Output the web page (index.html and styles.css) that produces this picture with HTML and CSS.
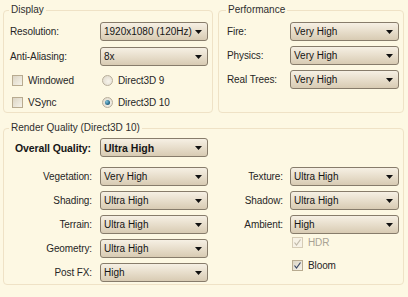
FILE: index.html
```html
<!DOCTYPE html>
<html>
<head>
<meta charset="utf-8">
<link rel="stylesheet" href="styles.css">
</head>
<body>
<div class="page">
  <div class="top">
    <fieldset class="group display">
      <legend>Display</legend>
      <div class="form">
        <span class="lbl">Resolution:</span>
        <div class="sel"><span>1920x1080 (120Hz)</span><svg class="arr" width="7" height="4" viewBox="0 0 7 4"><polygon points="0,0 7,0 3.5,4"/></svg></div>
        <span class="lbl">Anti-Aliasing:</span>
        <div class="sel"><span>8x</span><svg class="arr" width="7" height="4" viewBox="0 0 7 4"><polygon points="0,0 7,0 3.5,4"/></svg></div>
      </div>
      <div class="opts">
        <div class="opt"><span class="box"></span><span>Windowed</span></div>
        <div class="opt"><span class="radio"></span><span>Direct3D 9</span></div>
        <div class="opt"><span class="box"></span><span>VSync</span></div>
        <div class="opt"><span class="radio on"></span><span>Direct3D 10</span></div>
      </div>
    </fieldset>
    <fieldset class="group perf">
      <legend>Performance</legend>
      <div class="form form-perf">
        <span class="lbl">Fire:</span>
        <div class="sel"><span>Very High</span><svg class="arr" width="7" height="4" viewBox="0 0 7 4"><polygon points="0,0 7,0 3.5,4"/></svg></div>
        <span class="lbl">Physics:</span>
        <div class="sel"><span>Very High</span><svg class="arr" width="7" height="4" viewBox="0 0 7 4"><polygon points="0,0 7,0 3.5,4"/></svg></div>
        <span class="lbl">Real Trees:</span>
        <div class="sel"><span>Very High</span><svg class="arr" width="7" height="4" viewBox="0 0 7 4"><polygon points="0,0 7,0 3.5,4"/></svg></div>
      </div>
    </fieldset>
  </div>
  <fieldset class="group render">
    <legend>Render Quality (Direct3D 10)</legend>
    <div class="overall">
      <span class="lbl rl bold">Overall Quality:</span>
      <div class="sel bold"><span>Ultra High</span><svg class="arr" width="7" height="4" viewBox="0 0 7 4"><polygon points="0,0 7,0 3.5,4"/></svg></div>
    </div>
    <div class="cols">
      <div class="form form-left">
        <span class="lbl rl">Vegetation:</span>
        <div class="sel"><span>Very High</span><svg class="arr" width="7" height="4" viewBox="0 0 7 4"><polygon points="0,0 7,0 3.5,4"/></svg></div>
        <span class="lbl rl">Shading:</span>
        <div class="sel"><span>Ultra High</span><svg class="arr" width="7" height="4" viewBox="0 0 7 4"><polygon points="0,0 7,0 3.5,4"/></svg></div>
        <span class="lbl rl">Terrain:</span>
        <div class="sel"><span>Ultra High</span><svg class="arr" width="7" height="4" viewBox="0 0 7 4"><polygon points="0,0 7,0 3.5,4"/></svg></div>
        <span class="lbl rl">Geometry:</span>
        <div class="sel"><span>Ultra High</span><svg class="arr" width="7" height="4" viewBox="0 0 7 4"><polygon points="0,0 7,0 3.5,4"/></svg></div>
        <span class="lbl rl">Post FX:</span>
        <div class="sel"><span>High</span><svg class="arr" width="7" height="4" viewBox="0 0 7 4"><polygon points="0,0 7,0 3.5,4"/></svg></div>
      </div>
      <div class="right">
        <div class="form form-right">
          <span class="lbl rl">Texture:</span>
          <div class="sel"><span>Ultra High</span><svg class="arr" width="7" height="4" viewBox="0 0 7 4"><polygon points="0,0 7,0 3.5,4"/></svg></div>
          <span class="lbl rl">Shadow:</span>
          <div class="sel"><span>Ultra High</span><svg class="arr" width="7" height="4" viewBox="0 0 7 4"><polygon points="0,0 7,0 3.5,4"/></svg></div>
          <span class="lbl rl">Ambient:</span>
          <div class="sel"><span>High</span><svg class="arr" width="7" height="4" viewBox="0 0 7 4"><polygon points="0,0 7,0 3.5,4"/></svg></div>
        </div>
        <div class="checks">
          <div class="opt disabled"><span class="box checked"><svg width="9" height="9" viewBox="0 0 9 9"><polyline points="1.5,4.5 3.5,7 7.5,1.5" fill="none" stroke-width="1.2"/></svg></span><span>HDR</span></div>
          <div class="opt"><span class="box checked"><svg width="9" height="9" viewBox="0 0 9 9"><polyline points="1.5,4.5 3.5,7 7.5,1.5" fill="none" stroke-width="1.2"/></svg></span><span>Bloom</span></div>
        </div>
      </div>
    </div>
  </fieldset>
</div>
</body>
</html>
```
FILE: styles.css
```css
* { box-sizing: border-box; }
html, body {
  margin: 0;
  padding: 0;
  background: #fdf8e3;
}
body {
  font-family: "Liberation Sans", Arial, sans-serif;
  font-size: 10px;
  color: #262626;
  width: 408px;
  height: 297px;
  overflow: hidden;
}
.page {
  padding: 4px 4px 0 3px;
}
.top {
  display: flex;
  gap: 5px;
}
.group {
  margin: 0;
  min-width: 0;
  border: 1px solid #efe2c6;
  border-radius: 4px;
  background: #fdf8e3;
}
.group legend {
  padding: 0 2px;
  margin-left: -1px;
  line-height: 12px;
  color: #2e2e2e;
}
.display {
  width: 210px;
  padding: 6px 4px 3px 6px;
}
.perf {
  flex: 1;
  padding: 6px 4px 3px 8px;
}
.render {
  margin-top: 9px;
  padding: 4px 4px 2px 6px;
}
.form {
  display: grid;
  grid-template-columns: 90px 1fr;
  grid-auto-rows: 19px;
  row-gap: 6px;
  align-items: center;
}
.form-perf {
  grid-template-columns: 63px 1fr;
  row-gap: 5px;
}
.lbl {
  white-space: nowrap;
}
.opt span:last-child, .lbl { letter-spacing: -0.1px; }
.rl {
  text-align: right;
  padding-right: 8px;
}
.bold {
  font-weight: bold;
  font-size: 10.5px;
  color: #161616;
}
.sel {
  height: 19px;
  border: 1px solid #877c6b;
  border-radius: 3px;
  background: linear-gradient(#f6f0e4, #e6dcc9 55%, #d8cbb3);
  display: flex;
  align-items: center;
  justify-content: space-between;
  padding: 0 5px 0 3px;
  color: #151515;
}
.arr polygon { fill: #111; }
.opts {
  display: grid;
  grid-template-columns: 90px 1fr;
  grid-auto-rows: 13px;
  row-gap: 9px;
  margin-top: 8px;
  padding-left: 2px;
}
.opt {
  display: flex;
  align-items: center;
  gap: 5px;
}
.box {
  width: 11px;
  height: 11px;
  border: 1px solid #b8ab90;
  background: linear-gradient(135deg, #dcd5c4, #f6f3ea);
  display: flex;
  align-items: center;
  justify-content: center;
  flex: none;
}
.box svg polyline { stroke: #3a4866; }
.disabled { color: #a8a294; }
.disabled .box { border-color: #d6ccb6; background: #f7f2e6; }
.disabled .box svg polyline { stroke: #c0b9a9; }
.radio {
  width: 11px;
  height: 11px;
  border-radius: 50%;
  border: 1px solid #b8ae9b;
  background: radial-gradient(circle at 60% 60%, #f7f4ec, #ddd6c7);
  flex: none;
  display: flex;
  align-items: center;
  justify-content: center;
}
.radio.on::after {
  content: "";
  width: 5px;
  height: 5px;
  border-radius: 50%;
  background: radial-gradient(circle at 35% 35%, #7fc3de, #1f5f7e 70%);
}
.overall {
  display: grid;
  grid-template-columns: 90px 108px;
  grid-auto-rows: 19px;
  align-items: center;
}
.overall .lbl { padding-right: 9px; }
.cols {
  display: flex;
  margin-top: 10px;
}
.form-left {
  grid-template-columns: 90px 108px;
  row-gap: 5px;
}
.right {
  flex: 1;
}
.form-right {
  grid-template-columns: 82px 109px;
  row-gap: 5px;
}
.form-right .rl { padding-right: 7px; }
.checks {
  margin-top: 3px;
  margin-left: 84px;
  display: flex;
  flex-direction: column;
  gap: 12px;
}
```
